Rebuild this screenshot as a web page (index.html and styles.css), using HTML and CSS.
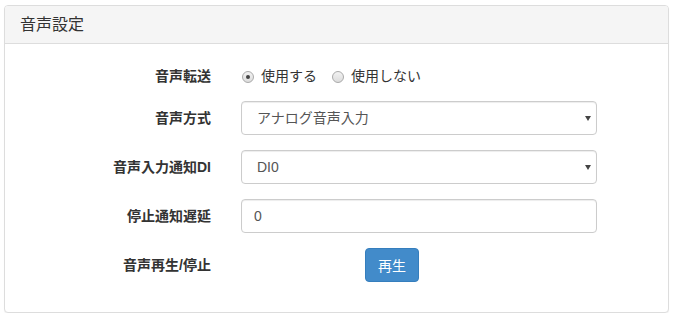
FILE: index.html
```html
<!DOCTYPE html>
<html lang="ja">
<head>
    <meta charset="UTF-8">
    <title>音声設定</title>
    <link rel="stylesheet" href="styles.css">
</head>
<body>
    <div class="panel">
        <div class="panel-heading">
            <h3 class="panel-title">音声設定</h3>
        </div>
        <div class="panel-body">
            <div class="form-group">
                <label class="control-label">音声転送</label>
                <div class="radios">
                    <label class="radio-inline"><input type="radio" name="voice" checked>使用する</label>
                    <label class="radio-inline"><input type="radio" name="voice">使用しない</label>
                </div>
            </div>
            <div class="form-group">
                <label class="control-label">音声方式</label>
                <div class="select-wrap">
                    <select class="form-control">
                        <option>アナログ音声入力</option>
                    </select>
                </div>
            </div>
            <div class="form-group">
                <label class="control-label">音声入力通知DI</label>
                <div class="select-wrap">
                    <select class="form-control">
                        <option>DI0</option>
                    </select>
                </div>
            </div>
            <div class="form-group">
                <label class="control-label">停止通知遅延</label>
                <input type="text" class="form-control" value="0">
            </div>
            <div class="form-group">
                <label class="control-label">音声再生/停止</label>
                <div class="btn-cell">
                    <button class="btn-primary">再生</button>
                </div>
            </div>
        </div>
    </div>
</body>
</html>
```

FILE: styles.css
```css
body {
    margin: 0;
    padding: 5px 5px 0 4px;
    font-family: "Liberation Sans", "Noto Sans CJK JP", sans-serif;
    font-size: 14px;
    line-height: 20px;
    color: #333;
    background: #fff;
}
.panel {
    border: 1px solid #ddd;
    border-radius: 4px;
    box-shadow: 0 1px 1px rgba(0, 0, 0, 0.05);
    background: #fff;
}
.panel-heading {
    background-color: #f5f5f5;
    border-bottom: 1px solid #ddd;
    border-radius: 3px 3px 0 0;
    padding: 9px 15px;
}
.panel-title {
    margin: 0;
    font-size: 16px;
    font-weight: normal;
    line-height: 19px;
    color: #333;
}
.panel-body {
    padding: 15px;
}
.form-group {
    display: grid;
    grid-template-columns: 191px 356px;
    column-gap: 30px;
    align-items: start;
    margin-bottom: 15px;
}
.control-label {
    text-align: right;
    font-weight: bold;
    padding-top: 7px;
}
.radios {
    display: flex;
    padding-top: 7px;
}
.radio-inline {
    display: inline-flex;
    align-items: center;
    margin-right: 14px;
    color: #333;
}
.radio-inline input {
    appearance: none;
    -webkit-appearance: none;
    width: 12px;
    height: 12px;
    margin: 1px 7px 0 1px;
    border: 1px solid #aaa;
    border-radius: 50%;
    background: linear-gradient(#f2f2f2, #dcdcdc);
    position: relative;
}
.radio-inline input:checked::after {
    content: "";
    position: absolute;
    left: 3px;
    top: 3px;
    width: 4px;
    height: 4px;
    border-radius: 50%;
    background: #444;
}
.form-control {
    box-sizing: border-box;
    width: 100%;
    height: 34px;
    padding: 6px 12px;
    font-family: inherit;
    font-size: 14px;
    color: #555;
    background: #fff;
    border: 1px solid #ccc;
    border-radius: 4px;
    box-shadow: inset 0 1px 1px rgba(0, 0, 0, 0.075);
}
.select-wrap {
    position: relative;
}
.select-wrap select {
    appearance: none;
    -webkit-appearance: none;
    padding-left: 15px;
}
.select-wrap::after {
    content: "";
    position: absolute;
    right: 6px;
    top: 15px;
    border-left: 3px solid transparent;
    border-right: 3px solid transparent;
    border-top: 5px solid #444;
}
.btn-cell {
    padding-left: 124px;
}
.btn-primary {
    height: 34px;
    padding: 6px 12px;
    font-family: inherit;
    font-size: 14px;
    color: #fff;
    background-color: #428bca;
    border: 1px solid #357ebd;
    border-radius: 4px;
    cursor: pointer;
}
```
